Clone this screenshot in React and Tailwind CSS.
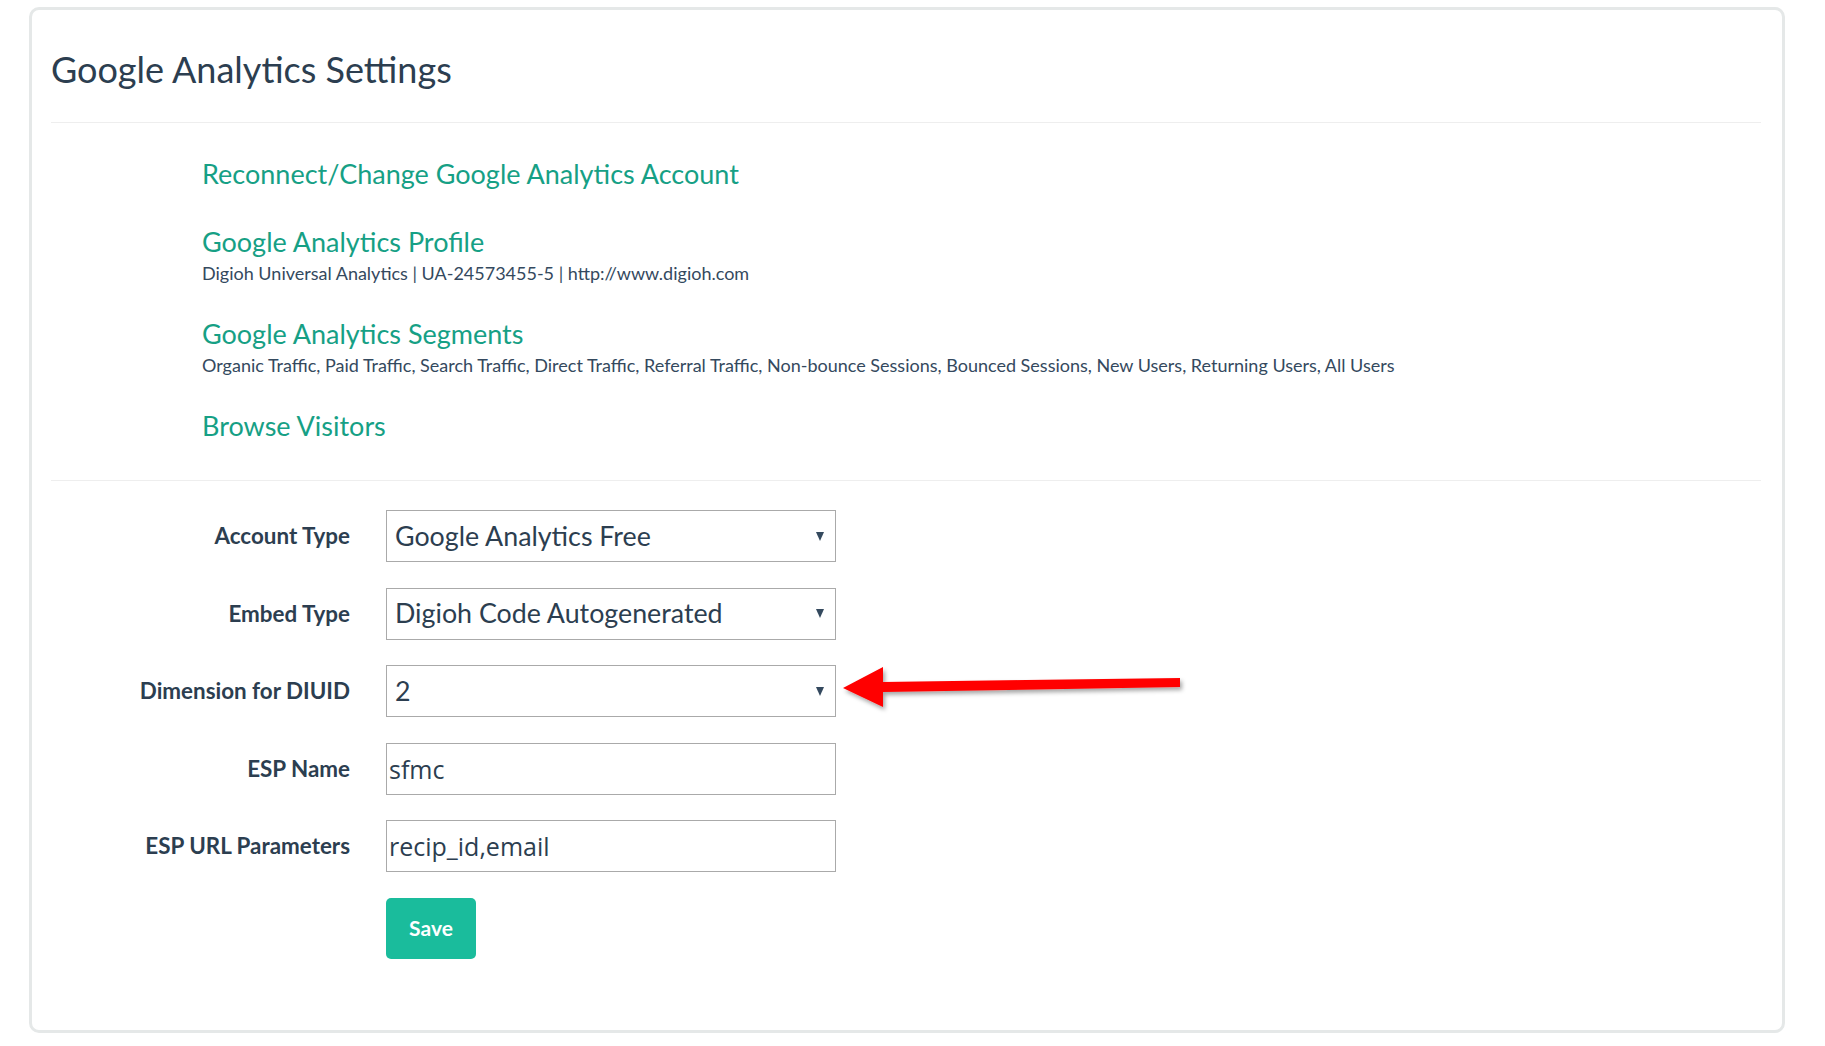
const links = [
    { title: 'Reconnect/Change Google Analytics Account' },
    { title: 'Google Analytics Profile', sub: 'Digioh Universal Analytics | UA-24573455-5 | http://www.digioh.com' },
    { title: 'Google Analytics Segments', sub: 'Organic Traffic, Paid Traffic, Search Traffic, Direct Traffic, Referral Traffic, Non-bounce Sessions, Bounced Sessions, New Users, Returning Users, All Users' },
    { title: 'Browse Visitors' },
]

const Caret = () => (
    <svg width="8" height="9" viewBox="0 0 8 9" className="shrink-0">
        <path d="M0 0 H8 L4 9 Z" fill="#34495e" />
    </svg>
)

const Arrow = () => (
    <svg width="360" height="70" viewBox="0 0 360 70" className="absolute left-0 top-[-10px] overflow-visible">
        <defs>
            <filter id="arrowShadow" x="-10%" y="-30%" width="120%" height="180%">
                <feDropShadow dx="2" dy="3" stdDeviation="2" floodColor="#000" floodOpacity="0.35" />
            </filter>
        </defs>
        <polygon points="7,33 47,12 47,27 344,23 344,32 47,37 47,52" fill="#ff0000" filter="url(#arrowShadow)" />
    </svg>
)

const Row = ({ label, children, arrow }) => {
    return (
        <div className="flex items-center h-[52px] mb-[25.5px]">
            <label className="w-[299px] text-right text-[22.4px] font-bold text-[#2c3e50]">{label}</label>
            <div className="ml-[36px]">{children}</div>
            {arrow && (
                <div className="relative h-full">
                    <Arrow />
                </div>
            )}
        </div>
    )
}

const SelectBox = ({ value }) => (
    <div className="flex items-center justify-between w-[450px] h-[52px] border border-[#aaaaaa] bg-white pl-[8px] pr-[11px] text-[26.8px] text-[#2c3e50]">
        <span>{value}</span>
        <Caret />
    </div>
)

const TextBox = ({ value }) => (
    <input
        readOnly
        value={value}
        className="block w-[450px] h-[52px] border border-[#aaaaaa] bg-white px-[2px] text-[25px] text-[#2c3e50] font-['Open_Sans',sans-serif] outline-none"
    />
)

const App = () => {
    return (
        <div className="min-h-screen bg-white pt-[7px] pl-[29px] font-['Lato',sans-serif]">
            <div className="w-[1756px] h-[1026px] border-[3px] border-[#e5e8e8] rounded-[10px] pl-[19px] pr-[21px] pt-[37px]">
                <h1 className="text-[36px] leading-[44px] text-[#2c3e50]">Google Analytics Settings</h1>
                <div className="mt-[31px] h-px bg-[#eeeeee]"></div>

                <div className="pl-[151px] pt-[34px] pb-[3px]">
                    {links.map((item) => (
                        <div key={item.title} className="mb-[34px]">
                            <a href="#" className="block text-[27px] leading-[34px] text-[#16a085]">{item.title}</a>
                            {item.sub && (
                                <div className="mt-[4px] text-[18px] leading-[20px] text-[#34495e]">{item.sub}</div>
                            )}
                        </div>
                    ))}
                </div>

                <div className="h-px bg-[#eeeeee]"></div>

                <div className="pt-[29px]">
                    <Row label="Account Type"><SelectBox value="Google Analytics Free" /></Row>
                    <Row label="Embed Type"><SelectBox value="Digioh Code Autogenerated" /></Row>
                    <Row label="Dimension for DIUID" arrow><SelectBox value="2" /></Row>
                    <Row label="ESP Name"><TextBox value="sfmc" /></Row>
                    <Row label="ESP URL Parameters"><TextBox value="recip_id,email" /></Row>
                    <div className="pl-[335px]">
                        <button type="submit" className="w-[90px] h-[61px] rounded-[5px] bg-[#1abc9c] text-white text-[21px] font-bold">Save</button>
                    </div>
                </div>
            </div>
        </div>
    )
}

export default App
